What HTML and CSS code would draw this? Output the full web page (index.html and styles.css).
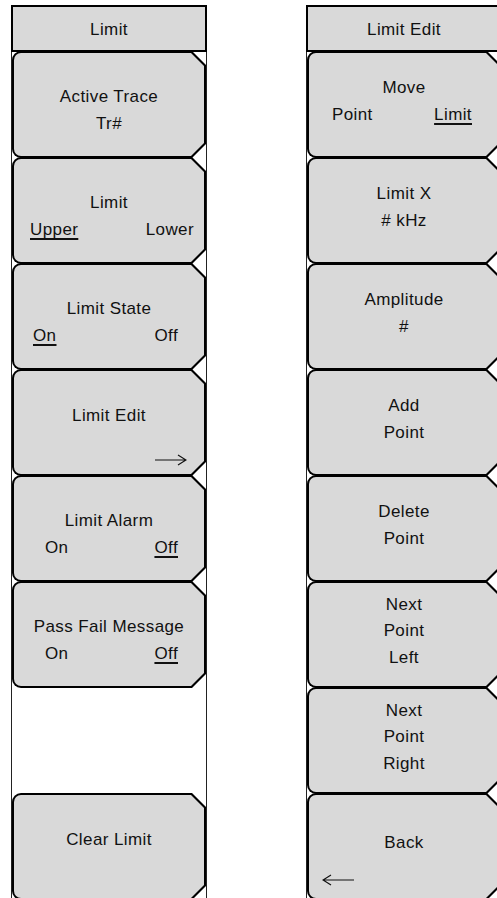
FILE: index.html
```html
<!DOCTYPE HTML>
<html>
<head>
    <title>Limit Menus</title>
    <link rel="stylesheet" href="styles.css">
</head>
<body>

<div class="screen">
    <div class="menu">
        <div class="menu-title">Limit</div>
        <div class="key"><div class="face face-low">
            <span>Active Trace</span>
            <span>Tr#</span>
        </div></div>
        <div class="key"><div class="face face-low">
            <span>Limit</span>
            <span class="pair pair-wide"><u>Upper</u><span>Lower</span></span>
        </div></div>
        <div class="key"><div class="face face-low">
            <span>Limit State</span>
            <span class="pair pair-state"><u>On</u><span>Off</span></span>
        </div></div>
        <div class="key"><div class="face face-up">
            <span>Limit Edit</span>
            <svg class="arrow arrow-right" width="32" height="12" viewBox="0 0 32 12">
                <path d="M0 6 H31 M23 1 L31 6 L23 11" fill="none" stroke="#111" stroke-width="1.2"/>
            </svg>
        </div></div>
        <div class="key"><div class="face face-low">
            <span>Limit Alarm</span>
            <span class="pair pair-narrow"><span>On</span><u>Off</u></span>
        </div></div>
        <div class="key"><div class="face face-low">
            <span>Pass Fail Message</span>
            <span class="pair pair-narrow"><span>On</span><u>Off</u></span>
        </div></div>
        <div class="key-blank"></div>
        <div class="key"><div class="face face-up">
            <span>Clear Limit</span>
        </div></div>
    </div>

    <div class="menu">
        <div class="menu-title">Limit Edit</div>
        <div class="key"><div class="face">
            <span>Move</span>
            <span class="pair pair-move"><span>Point</span><u>Limit</u></span>
        </div></div>
        <div class="key"><div class="face">
            <span>Limit X</span>
            <span># kHz</span>
        </div></div>
        <div class="key"><div class="face">
            <span>Amplitude</span>
            <span>#</span>
        </div></div>
        <div class="key"><div class="face">
            <span>Add</span>
            <span>Point</span>
        </div></div>
        <div class="key"><div class="face">
            <span>Delete</span>
            <span>Point</span>
        </div></div>
        <div class="key"><div class="face">
            <span>Next</span>
            <span>Point</span>
            <span>Left</span>
        </div></div>
        <div class="key"><div class="face">
            <span>Next</span>
            <span>Point</span>
            <span>Right</span>
        </div></div>
        <div class="key"><div class="face">
            <span>Back</span>
            <svg class="arrow arrow-left" width="32" height="12" viewBox="0 0 32 12">
                <path d="M32 6 H1 M9 1 L1 6 L9 11" fill="none" stroke="#111" stroke-width="1.2"/>
            </svg>
        </div></div>
    </div>
</div>

</body>
</html>
```

FILE: styles.css
```css
html, body {
    margin: 0;
    padding: 0;
    background: #fff;
    overflow: hidden;
}

body {
    width: 497px;
    height: 898px;
    font-family: "Liberation Sans", Arial, sans-serif;
    font-size: 17px;
    letter-spacing: 0.4px;
    color: #111;
}

u {
    text-decoration-thickness: 1.5px;
    text-underline-offset: 3px;
    text-decoration-skip-ink: none;
}

.screen {
    display: flex;
    gap: 99px;
    padding: 5px 0 0 11px;
}

.menu {
    flex: none;
    width: 196px;
    height: 900px;
    box-sizing: border-box;
    border-left: 1px solid #222;
    border-right: 1px solid #222;
}

.menu-title {
    height: 47px;
    box-sizing: border-box;
    margin: 0 -1px;
    padding-top: 3px;
    border: 2px solid #000;
    background: #d9d9d9;
    display: flex;
    align-items: center;
    justify-content: center;
}

.key {
    height: 107px;
    margin-top: -1px;
    box-sizing: border-box;
    padding: 2px;
    background: #000;
    border-radius: 9px 0 0 9px;
    clip-path: polygon(0 0, calc(100% - 14px) 0, 100% 14px, 100% calc(100% - 14px), calc(100% - 14px) 100%, 0 100%);
}

.key-blank {
    height: 107px;
    margin-top: -1px;
}

.face {
    position: relative;
    height: 100%;
    box-sizing: border-box;
    padding-bottom: 6px;
    background: #d9d9d9;
    border-radius: 7px 0 0 7px;
    clip-path: polygon(0 0, calc(100% - 13px) 0, 100% 13px, 100% calc(100% - 13px), calc(100% - 13px) 100%, 0 100%);
    display: flex;
    flex-direction: column;
    align-items: center;
    justify-content: center;
    line-height: 26.5px;
    text-align: center;
}

.face-low {
    padding: 12px 0 0;
}

.face-up {
    padding-bottom: 12px;
}

.pair {
    align-self: stretch;
    display: flex;
    justify-content: space-between;
}

.pair-wide {
    padding: 0 10px 0 16px;
}

.pair-state {
    padding: 0 26px 0 19px;
}

.pair-narrow {
    padding: 0 26px 0 31px;
}

.pair-move {
    padding: 0 27px 0 23px;
}

.arrow {
    position: absolute;
    bottom: 8px;
}

.arrow-right {
    right: 17px;
}

.arrow-left {
    left: 13px;
    bottom: 12px;
}
```
